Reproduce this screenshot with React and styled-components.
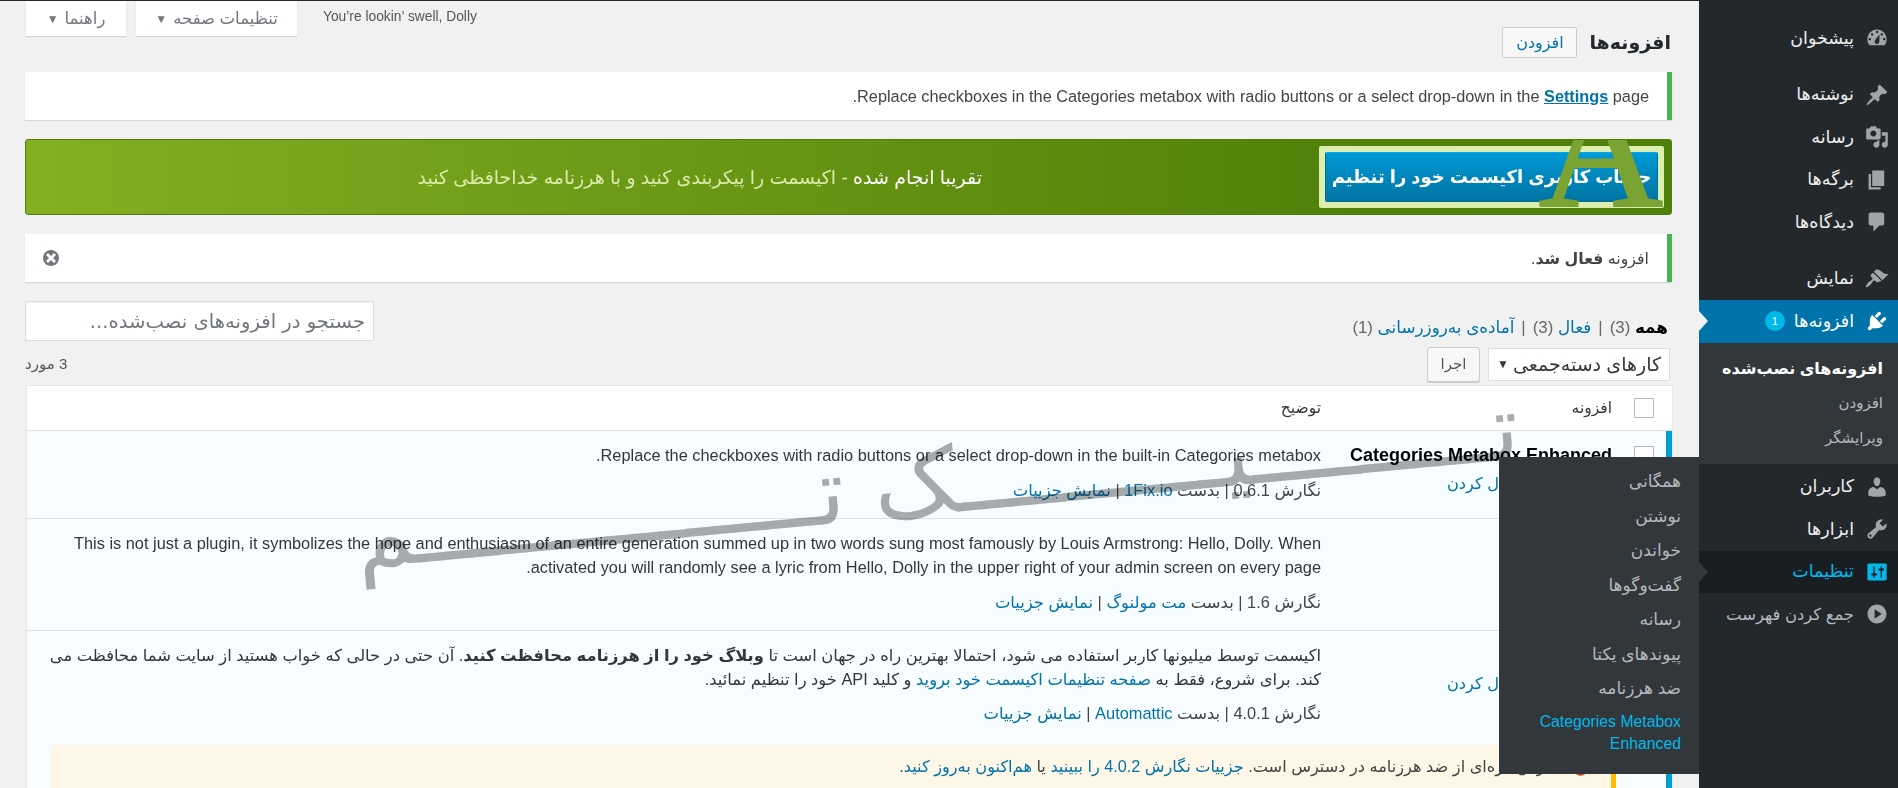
import React from 'react';
import styled, { createGlobalStyle } from 'styled-components';

const Global = createGlobalStyle`
  html, body { margin: 0; padding: 0; background: #f1f1f1; }
  * { box-sizing: border-box; }
  body { font-family: "Liberation Sans", "DejaVu Sans", sans-serif; color: #444; font-size: 15px; }
  a { color: #0073aa; text-decoration: none; }
`;

const Page = styled.div`
  direction: rtl; display: flex; width: 1898px; height: 788px; overflow: hidden; position: relative;
  border-top: 1px solid #23282d; background: #f1f1f1;
`;
const Sidebar = styled.nav`
  width: 199px; flex: none; background: #23282d; display: flex; flex-direction: column; padding-top: 16px; position: relative; z-index: 3;
`;
const MenuItem = styled.div`
  position: relative; height: 42.5px; flex: none; display: flex; align-items: center; gap: 11px; padding-right: 9px;
  margin-top: ${p => p.$mt || 0}px;
  color: ${p => p.$color || '#eee'}; background: ${p => p.$bg || 'transparent'};
  font-size: ${p => p.$fs || 17.5}px; white-space: nowrap;
  svg { fill: ${p => p.$icon || '#a0a5aa'}; }
`;
const Icon = styled.svg`
  width: 24px; height: 24px; flex: none; transform: ${p => p.$flip ? 'scaleX(-1)' : 'none'};
`;
const Badge = styled.span`
  width: 20px; height: 20px; border-radius: 50%; background: #00b9eb; color: #fff; font-size: 11px; display: flex; align-items: center; justify-content: center; margin-right: -2px;
`;
const Notch = styled.span`
  position: absolute; left: 0; top: 50%; margin-top: -10px; border-style: solid; border-width: 10px 0 10px 9px;
  border-color: transparent transparent transparent ${p => p.$color};
`;
const Submenu = styled.div`
  background: #32373c; padding: 8px 15px 8px 0; height: 121px; margin-bottom: 2px; flex: none;
`;
const SubItem = styled.div`
  height: 35px; display: flex; align-items: center; color: ${p => p.$active ? '#fff' : '#b4b9be'}; font-weight: ${p => p.$active ? 700 : 400}; font-size: ${p => p.$active ? 16 : 15}px; white-space: nowrap;
`;
const Flyout = styled.div`
  position: absolute; right: 100%; top: -94px; width: 200px; height: 317px; background: #32373c; padding: 8px 18px 0 0; z-index: 5;
`;
const FlyItem = styled.div`
  min-height: 34.5px; display: flex; align-items: center; font-size: 17px; color: #b4b9be; white-space: nowrap;
`;
const FlyLink = styled.div`
  margin-top: 5px; font-size: 15.8px; line-height: 22px; color: #00b9eb; white-space: normal;
`;
const Content = styled.main`
  flex: 1; min-width: 0; padding: 0 27px 0 25px; overflow: hidden;
`;
const TopBar = styled.div`
  display: flex; justify-content: flex-end; height: 26px; align-items: flex-start; gap: 10px;
`;
const Dolly = styled.div`
  direction: ltr; font-size: 13.8px; color: #555; margin: 8px 0 0 16px; white-space: nowrap;
`;
const ScreenTab = styled.div`
  background: #fff; height: 35px; width: ${p => p.$w}px; margin-left: ${p => p.$ml || 0}px; flex: none; display: flex; align-items: center; justify-content: center; gap: 6px;
  color: #72777c; font-size: 16.5px; box-shadow: 0 1px 1px rgba(0,0,0,.12); white-space: nowrap;
`;
const Caret = styled.span`
  font-size: 12px; color: ${p => p.$dark ? '#32373c' : '#72777c'};
`;
const HeadRow = styled.div`
  height: 31px; display: flex; align-items: center; gap: 12px; margin: 0 1px 14px 0;
`;
const Title = styled.h1`
  margin: 0; font-size: 19px; font-weight: 700; color: #23282d;
`;
const AddButton = styled.a`
  border: 1px solid #ccc; background: #f7f7f7; border-radius: 2px; height: 31px; width: 75px; display: flex; align-items: center; justify-content: center; font-size: 16px; white-space: nowrap;
`;
const Notice = styled.div`
  background: #fff; height: 48px; border-right: 5px solid #46b450; box-shadow: 0 1px 1px rgba(0,0,0,.1); margin-bottom: 19px;
  display: flex; align-items: center; justify-content: space-between; padding: 0 18px 0 16px; font-size: ${p => p.$fs || 16.3}px; white-space: nowrap;
`;
const NoticeText = styled.span`
  color: #444; a { font-weight: 700; text-decoration: underline; }
`;
const Dismiss = styled.svg`
  width: 20px; height: 20px; fill: #72777c;
`;
const Promo = styled.div`
  position: relative; height: 76px; margin-bottom: 19px; border: 1px solid #4f800d; border-radius: 3px; overflow: hidden;
  background: linear-gradient(to left, #4f800a 0%, #528209 22%, #84af22 100%);
  display: flex; align-items: center; padding-right: 7px; gap: 337px; color: #dbeaa8;
`;
const PromoFrame = styled.div`
  width: 345px; height: 62px; flex: none; background: #dcefae; border-radius: 2px; padding: 6px;
`;
const PromoButton = styled.div`
  height: 50px; background: linear-gradient(#0099d6, #0074a2); border: 1px solid #006d98; border-top-color: #00a8ef; border-radius: 2px;
  color: #fff; font-weight: 700; font-size: 18px; display: flex; align-items: center; justify-content: center; white-space: nowrap;
`;
const PromoText = styled.div`
  font-size: 19px; white-space: nowrap; b { color: #fff; font-weight: 400; }
`;
const PromoLetter = styled.span`
  position: absolute; right: 8px; bottom: 8px; font-family: "Liberation Serif", serif; font-size: 172px; line-height: 116px; height: 116px; color: #7aa334; -webkit-text-stroke: 2px #7aa334; direction: ltr;
`;
const FilterRow = styled.div`
  display: flex; justify-content: space-between; align-items: flex-end; height: 40px; margin-bottom: 5px; padding-right: 4px;
`;
const Tabs = styled.div`
  font-size: 16.8px; color: #666; padding-bottom: 3px; white-space: nowrap; strong { color: #000; } i { font-style: normal; margin: 0 7px; }
`;
const Search = styled.input`
  width: 349px; height: 40px; border: 1px solid #ddd; background: #fff; font: 400 19.6px "DejaVu Sans", sans-serif; padding: 0 8px; box-shadow: inset 0 1px 2px rgba(0,0,0,.07);
  &::placeholder { color: #72777c; opacity: 1; }
`;
const BulkRow = styled.div`
  display: flex; justify-content: space-between; align-items: center; height: 36px; margin-bottom: 4px; padding-right: 2px;
`;
const BulkLeft = styled.div`
  display: flex; align-items: center; gap: 8px;
`;
const Select = styled.div`
  width: 182px; height: 33px; background: #fff; border: 1px solid #ddd; display: flex; justify-content: space-between; align-items: center; padding: 0 8px; font-size: 19px; color: #32373c; white-space: nowrap;
`;
const ApplyBtn = styled.div`
  width: 53px; height: 35px; background: #f7f7f7; border: 1px solid #ccc; border-radius: 3px; box-shadow: 0 1px 0 #ccc; display: flex; align-items: center; justify-content: center; font-size: 15px; color: #555;
`;
const Count = styled.span`
  font-size: 15px; color: #555;
`;
const Table = styled.div`
  margin-left: 2px; background: #fff; box-shadow: 0 0 1px rgba(0,0,0,.25);
`;
const Row = styled.div`
  display: grid; grid-template-columns: ${p => p.$active ? 54 : 60}px 291px 1fr; border-bottom: 1px solid #e1e1e1;
  background: ${p => p.$active ? '#f7fcfe' : '#fff'};
  padding: ${p => p.$head ? '0' : p.$tall ? '12px 0 0' : '12px 0 16px'};
  height: ${p => p.$h}px;
  border-right: ${p => p.$active ? '6px solid #00a0d2' : 'none'};
`;
const CheckCell = styled.div`
  padding-right: ${p => p.$active ? 12 : 18}px; padding-top: ${p => p.$head ? 12 : 3}px;
`;
const Box = styled.span`
  display: block; width: 20px; height: 20px; background: #fff; border: 1px solid #b4b9be;
`;
const HeadCell = styled.div`
  font-size: 15.5px; color: #32373c; align-self: center;
`;
const PluginCell = styled.div`
  font-size: 16.2px; white-space: nowrap;
`;
const PluginName = styled.div`
  font-weight: 700; font-size: 18px; color: #000; line-height: 24px; margin-bottom: 4px;
`;
const Actions = styled.div`
  line-height: 24px; color: #666;
`;
const DescCell = styled.div`
  white-space: nowrap; font-size: 16.35px; color: #32373c; line-height: 24px;
`;
const Meta = styled.div`
  margin-top: ${p => p.$mt || 11}px; font-size: 16.4px; color: #444;
`;
const Update = styled.div`
  grid-column: 2 / -1; margin: 18px -4px 0 24px; height: 44px; background: #fef7e7; border-right: 5px solid #ffb900; padding: 12px 20px 0 0; font-size: 16.2px; white-space: nowrap; color: #444; display: flex; gap: 8px;
`;
const UpdateIcon = styled.svg`
  width: 20px; height: 20px; flex: none; fill: #d54e21; margin-top: 2px;
`;
const Watermark = styled.div`
  position: absolute; left: 361px; top: 421px; width: 1160px; transform: rotate(-5.4deg); z-index: 2;
  font: 400 92px/120px "DejaVu Sans", sans-serif; color: #aaacae; mix-blend-mode: multiply; white-space: nowrap; pointer-events: none;
`;

const I = ({ d, flip }) => <Icon viewBox="0 0 20 20" $flip={flip}><path d={d} /></Icon>;
const P = {
  dash: "M3.76 16h12.48c1.1-1.37 1.76-3.11 1.76-5 0-4.42-3.58-8-8-8s-8 3.58-8 8c0 1.89.66 3.63 1.76 5zM10 4c.55 0 1 .45 1 1s-.45 1-1 1-1-.45-1-1 .45-1 1-1zM6 6c.55 0 1 .45 1 1s-.45 1-1 1-1-.45-1-1 .45-1 1-1zm8 0c.55 0 1 .45 1 1s-.45 1-1 1-1-.45-1-1 .45-1 1-1zm-5.37 5.55L12 7v6c0 1.1-.9 2-2 2s-2-.9-2-2c0-.57.24-1.08.63-1.45zM4 10c.55 0 1 .45 1 1s-.45 1-1 1-1-.45-1-1 .45-1 1-1zm12 0c.55 0 1 .45 1 1s-.45 1-1 1-1-.45-1-1 .45-1 1-1z",
  post: "M10.44 3.02l1.82-1.82 6.36 6.35-1.83 1.82c-1.05-.68-2.48-.57-3.41.36l-.75.75c-.92.93-1.04 2.35-.35 3.41l-1.83 1.82-2.41-2.41-2.8 2.79c-.42.42-3.38 2.71-3.8 2.29s1.86-3.39 2.28-3.81l2.79-2.79L4.1 9.36l1.83-1.82c1.05.69 2.48.57 3.4-.36l.75-.75c.93-.92 1.05-2.35.36-3.41z",
  media: "M13 11V4c0-.55-.45-1-1-1h-1.67L9 1H5L3.67 3H2c-.55 0-1 .45-1 1v7c0 .55.45 1 1 1h10c.55 0 1-.45 1-1zM7 4.5c1.38 0 2.5 1.12 2.5 2.5S8.38 9.5 7 9.5 4.5 8.38 4.5 7 5.62 4.5 7 4.5zM14 6h5v10.5c0 1.38-1.12 2.5-2.5 2.5S14 17.88 14 16.5s1.12-2.5 2.5-2.5c.17 0 .34.02.5.05V9h-3V6zm-4 8.05V13h2v3.5c0 1.38-1.12 2.5-2.5 2.5S7 17.88 7 16.5 8.12 14 9.5 14c.17 0 .34.02.5.05z",
  page: "M6 15V2h10v13H6zm-1 1h8v2H3V5h2v11z",
  comment: "M5 2h9c1.1 0 2 .9 2 2v7c0 1.1-.9 2-2 2h-2l-5 5v-5H5c-1.1 0-2-.9-2-2V4c0-1.1.9-2 2-2z",
  brush: "M14.48 11.06L7.41 3.99l1.5-1.5c.5-.56 2.3-.47 3.51.32 1.21.8 1.43 1.28 2.91 2.1 1.18.64 2.45 1.26 4.45.85zm-.71.71L6.7 4.7 4.93 6.47c-.39.39-.39 1.02 0 1.41l1.06 1.06c.39.39.39 1.03 0 1.42-.6.6-1.43 1.11-2.21 1.69-.35.26-.7.53-1.01.84-.97.97-1.87 2.7-2.17 3.46-.12.32.05.62.38.55.85-.2 2.6-1.2 3.55-2.15.31-.31.58-.66.84-1.01.58-.78 1.09-1.61 1.69-2.21.39-.39 1.03-.39 1.42 0l1.06 1.06c.39.39 1.02.39 1.41 0z",
  plugin: "M13.11 4.36L9.87 7.6 8 5.73l3.24-3.24c.35-.34 1.05-.2 1.56.32.52.51.66 1.21.31 1.55zm-8 1.77l.91-1.12 9.01 9.01-1.19.84c-.71.71-2.63 1.16-3.82 1.16H6.14L4.9 17.26c-.59.59-1.54.59-2.12 0-.59-.58-.59-1.53 0-2.12l1.24-1.24v-3.88c0-1.13.4-3.19 1.09-3.89zm7.26 3.97l3.24-3.24c.34-.35 1.04-.21 1.55.31.52.51.66 1.21.31 1.55l-3.24 3.25z",
  users: "M10 9.25c-2.27 0-2.73-3.44-2.73-3.44C7 4.02 7.82 2 9.97 2c2.16 0 2.98 2.02 2.71 3.81 0 0-.41 3.44-2.68 3.44zm0 2.57L12.72 10c2.39 0 4.52 2.33 4.52 4.53v2.49s-3.65 1.13-7.24 1.13c-3.65 0-7.24-1.13-7.24-1.13v-2.49c0-2.25 1.94-4.48 4.47-4.48z",
  tools: "M16.68 9.77c-1.34 1.34-3.3 1.67-4.95.99l-5.41 6.52c-.99.99-2.59.99-3.58 0s-.99-2.59 0-3.57l6.52-5.42c-.68-1.65-.35-3.61.99-4.95 1.28-1.28 3.12-1.62 4.72-1.06l-2.89 2.89 2.82 2.82 2.86-2.87c.53 1.58.18 3.39-1.08 4.65zM3.81 16.21c.4.39 1.04.39 1.43 0 .4-.4.4-1.04 0-1.43-.39-.4-1.03-.4-1.43 0-.39.39-.39 1.03 0 1.43z",
  settings: "M18 16V4c0-.55-.45-1-1-1H3c-.55 0-1 .45-1 1v12c0 .55.45 1 1 1h14c.55 0 1-.45 1-1zM8 11h1c.55 0 1 .45 1 1s-.45 1-1 1H8v1.5c0 .28-.22.5-.5.5s-.5-.22-.5-.5V13H6c-.55 0-1-.45-1-1s.45-1 1-1h1V5.5c0-.28.22-.5.5-.5s.5.22.5.5V11zm5-2h-1c-.55 0-1-.45-1-1s.45-1 1-1h1V5.5c0-.28.22-.5.5-.5s.5.22.5.5V7h1c.55 0 1 .45 1 1s-.45 1-1 1h-1v5.5c0 .28-.22.5-.5.5s-.5-.22-.5-.5V9z",
  collapse: "M10 2.16c4.33 0 7.84 3.51 7.84 7.84s-3.51 7.84-7.84 7.84S2.16 14.33 2.16 10 5.71 2.16 10 2.16zm2 11.72V6.12L6.18 9.97z",
  dismiss: "M10 2c4.42 0 8 3.58 8 8s-3.58 8-8 8-8-3.58-8-8 3.58-8 8-8zm5 11l-3-3 3-3-2-2-3 3-3-3-2 2 3 3-3 3 2 2 3-3 3 3z",
  update: "M10.2 3.28c3.53 0 6.43 2.61 6.92 6h2.08l-3.5 4-3.5-4h2.32c-.45-1.97-2.21-3.45-4.32-3.45-1.45 0-2.73.71-3.54 1.78L4.95 5.66C6.23 4.2 8.11 3.28 10.2 3.28zm-.4 13.44c-3.52 0-6.43-2.61-6.92-6H.8l3.5-4c1.17 1.33 2.33 2.67 3.5 4H5.48c.45 1.97 2.21 3.45 4.32 3.45 1.45 0 2.73-.71 3.54-1.78l1.71 1.95c-1.28 1.46-3.15 2.38-5.25 2.38z",
};

const flyItems = ['همگانی', 'نوشتن', 'خواندن', 'گفت‌وگوها', 'رسانه', 'پیوندهای یکتا', 'ضد هرزنامه'];
const K = n => 'ـ'.repeat(n);

export default function App() {
  return (
    <Page>
      <Global />
      <Sidebar>
        <MenuItem><I d={P.dash} />پیشخوان</MenuItem>
        <MenuItem $mt={14}><I d={P.post} />نوشته‌ها</MenuItem>
        <MenuItem><I d={P.media} />رسانه</MenuItem>
        <MenuItem><I d={P.page} />برگه‌ها</MenuItem>
        <MenuItem><I d={P.comment} />دیدگاه‌ها</MenuItem>
        <MenuItem $mt={14}><I d={P.brush} />نمایش</MenuItem>
        <MenuItem $bg="#0073aa" $color="#fff" $icon="#fff"><I d={P.plugin} />افزونه‌ها<Badge>1</Badge><Notch $color="#f1f1f1" /></MenuItem>
        <Submenu>
          <SubItem $active>افزونه‌های نصب‌شده</SubItem>
          <SubItem>افزودن</SubItem>
          <SubItem>ویرایشگر</SubItem>
        </Submenu>
        <MenuItem><I d={P.users} />کاربران</MenuItem>
        <MenuItem><I d={P.tools} />ابزارها</MenuItem>
        <MenuItem $bg="#191e23" $color="#00b9eb" $icon="#00b9eb">
          <I d={P.settings} />تنظیمات
          <Notch $color="#32373c" />
          <Flyout>
            {flyItems.map(t => <FlyItem key={t}>{t}</FlyItem>)}
            <FlyLink>Categories Metabox Enhanced</FlyLink>
          </Flyout>
        </MenuItem>
        <MenuItem $color="#b4b9be" $fs={16.4}><I d={P.collapse} flip />جمع کردن فهرست</MenuItem>
      </Sidebar>
      <Content>
        <TopBar>
          <Dolly>You’re lookin’ swell, Dolly</Dolly>
          <ScreenTab $w={161}>تنظیمات صفحه <Caret>▼</Caret></ScreenTab>
          <ScreenTab $w={100} $ml={1}>راهنما <Caret>▼</Caret></ScreenTab>
        </TopBar>
        <HeadRow>
          <Title>افزونه‌ها</Title>
          <AddButton>افزودن</AddButton>
        </HeadRow>
        <Notice>
          <NoticeText>Replace checkboxes in the Categories metabox with radio buttons or a select drop-down in the <a>Settings</a> page.</NoticeText>
        </Notice>
        <Promo>
          <PromoFrame><PromoButton>حساب کاربری اکیسمت خود را تنظیم</PromoButton></PromoFrame>
          <PromoText><b>تقریبا انجام شده</b> - اکیسمت را پیکربندی کنید و با هرزنامه خداحافظی کنید</PromoText>
          <PromoLetter>A</PromoLetter>
        </Promo>
        <Notice $fs={15.8}>
          <NoticeText>افزونه <b>فعال شد</b>.</NoticeText>
          <Dismiss viewBox="0 0 20 20"><path d={P.dismiss} /></Dismiss>
        </Notice>
        <FilterRow>
          <Tabs><strong>همه</strong> (3)<i>|</i><a>فعال</a> (3)<i>|</i><a>آماده‌ی به‌روزرسانی</a> (1)</Tabs>
          <Search placeholder="جستجو در افزونه‌های نصب‌شده..." />
        </FilterRow>
        <BulkRow>
          <BulkLeft>
            <Select>کارهای دسته‌جمعی <Caret $dark>▼</Caret></Select>
            <ApplyBtn>اجرا</ApplyBtn>
          </BulkLeft>
          <Count>3 مورد</Count>
        </BulkRow>
        <Table>
          <Row $head $h={45}>
            <CheckCell $head><Box /></CheckCell>
            <HeadCell>افزونه</HeadCell>
            <HeadCell>توضیح</HeadCell>
          </Row>
          <Row $active $h={88}>
            <CheckCell $active><Box /></CheckCell>
            <PluginCell>
              <PluginName>Categories Metabox Enhanced</PluginName>
              <Actions><a>تنظیمات</a> | <a>غیرفعال کردن</a></Actions>
            </PluginCell>
            <DescCell>
              <div>Replace the checkboxes with radio buttons or a select drop-down in the built-in Categories metabox.</div>
              <Meta>نگارش 0.6.1 | بدست <a>1Fix.io</a> | <a>نمایش جزییات</a></Meta>
            </DescCell>
          </Row>
          <Row $active $h={112}>
            <CheckCell $active><Box /></CheckCell>
            <PluginCell>
              <PluginName>Hello Dolly</PluginName>
              <Actions><a>غیرفعال کردن</a></Actions>
            </PluginCell>
            <DescCell>
              <div>This is not just a plugin, it symbolizes the hope and enthusiasm of an entire generation summed up in two words sung most famously by Louis Armstrong: Hello, Dolly. When</div>
              <div>activated you will randomly see a lyric from Hello, Dolly in the upper right of your admin screen on every page.</div>
              <Meta>نگارش 1.6 | بدست <a>مت مولنوگ</a> | <a>نمایش جزییات</a></Meta>
            </DescCell>
          </Row>
          <Row $active $tall $h={160}>
            <CheckCell $active><Box /></CheckCell>
            <PluginCell>
              <PluginName>ضد هرزنامه</PluginName>
              <Actions><a>تنظیمات</a> | <a>غیرفعال کردن</a></Actions>
            </PluginCell>
            <DescCell>
              <div>اکیسمت توسط میلیونها کاربر استفاده می شود، احتمالا بهترین راه در جهان است تا <b>وبلاگ خود را از هرزنامه محافظت کنید</b>. آن حتی در حالی که خواب هستید از سایت شما محافظت می</div>
              <div>کند. برای شروع، فقط به <a>صفحه تنظیمات اکیسمت خود بروید</a> و کلید API خود را تنظیم نمائید.</div>
              <Meta $mt={10}>نگارش 4.0.1 | بدست <a>Automattic</a> | <a>نمایش جزییات</a></Meta>
            </DescCell>
            <Update>
              <UpdateIcon viewBox="0 0 20 20"><path d={P.update} /></UpdateIcon>
              <span>نگارش تازه‌ای از ضد هرزنامه در دسترس است. <a>جزییات نگارش 4.0.2 را ببینید</a> یا <a>هم‌اکنون به‌روز کنید</a>.</span>
            </Update>
          </Row>
        </Table>
      </Content>
      <Watermark>{`ت${K(9)}ی${K(10)}ک ت${K(15)}م`}</Watermark>
    </Page>
  );
}
